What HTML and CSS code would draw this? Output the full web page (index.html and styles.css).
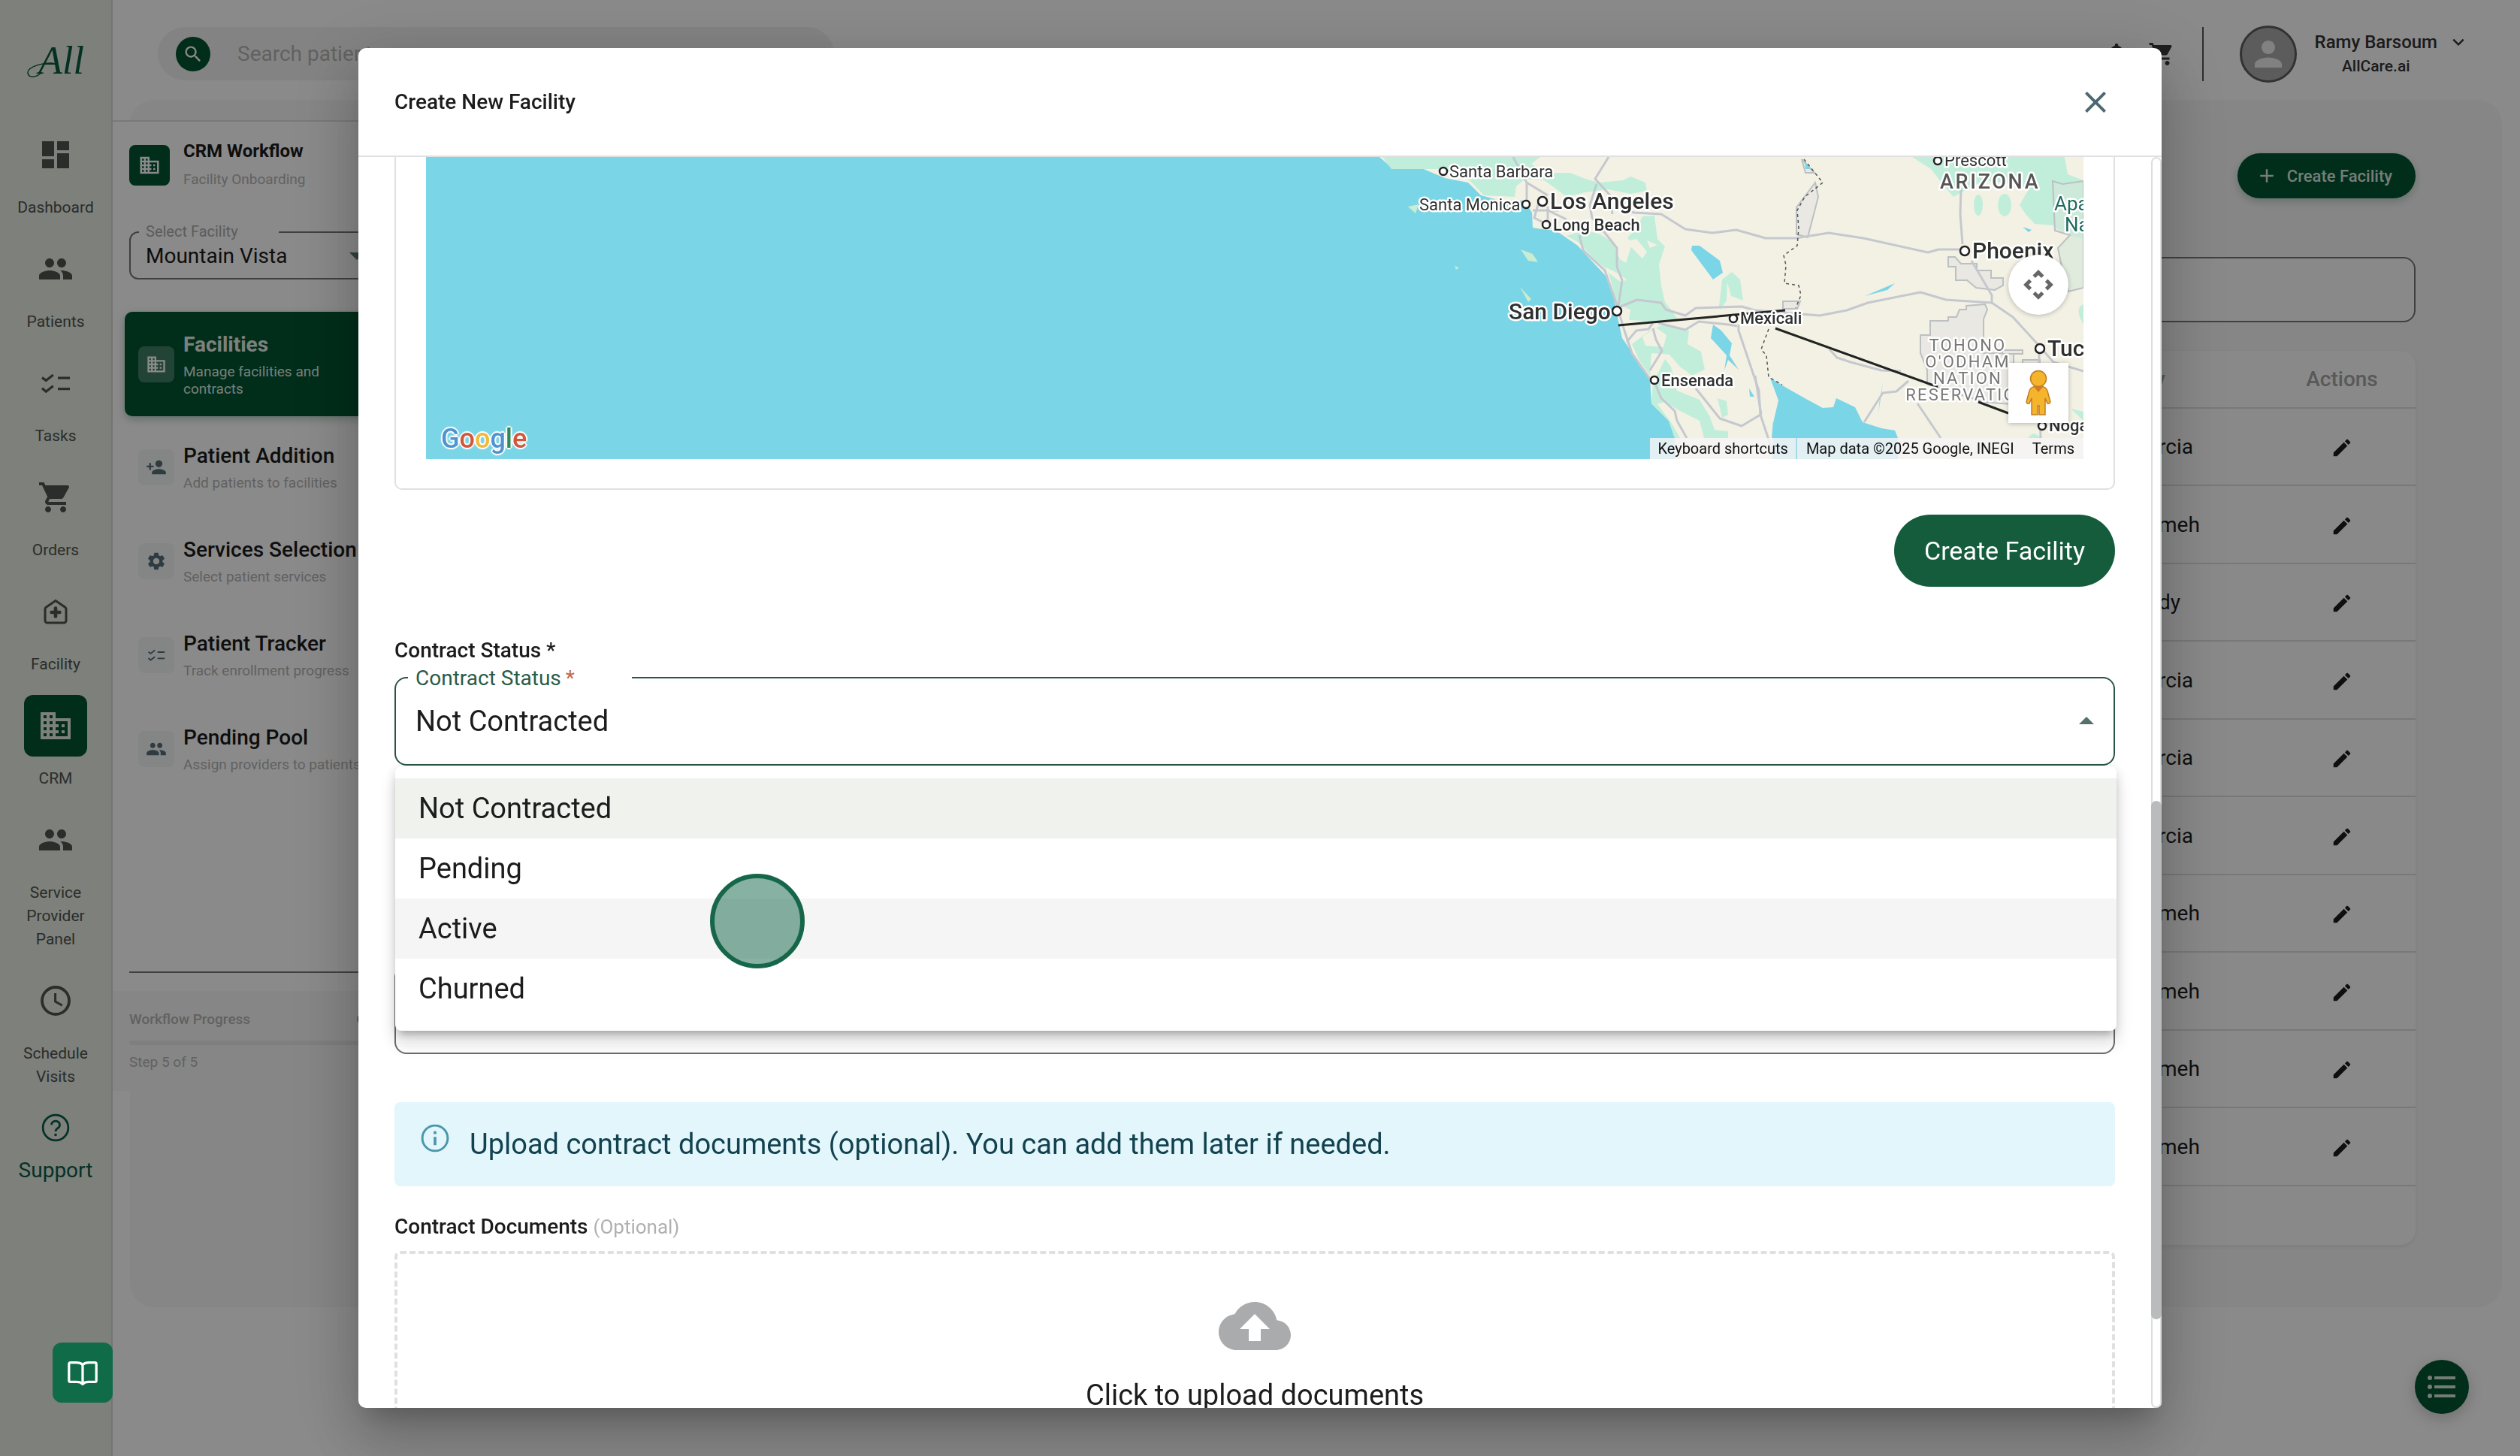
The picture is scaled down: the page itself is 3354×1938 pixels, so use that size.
FILE: index.html
```html
<!DOCTYPE html>
<html lang="en">
<head>
<meta charset="utf-8">
<meta name="viewport" content="width=device-width, initial-scale=1">
<title>Create New Facility</title>
<link rel="stylesheet" href="styles.css">
</head>
<body>
<svg class="sprite" aria-hidden="true">
  <symbol id="i-dashboard" viewBox="0 0 24 24"><path d="M3 13h8V3H3v10zm0 8h8v-6H3v6zm10 0h8V11h-8v10zm0-18v6h8V3h-8z"/></symbol>
  <symbol id="i-people" viewBox="0 0 24 24"><path d="M16 11c1.66 0 2.99-1.34 2.99-3S17.66 5 16 5c-1.66 0-3 1.34-3 3s1.34 3 3 3zm-8 0c1.66 0 2.99-1.34 2.99-3S9.66 5 8 5C6.34 5 5 6.34 5 8s1.34 3 3 3zm0 2c-2.33 0-7 1.17-7 3.5V19h14v-2.5c0-2.33-4.67-3.5-7-3.5zm8 0c-.29 0-.62.02-.97.05 1.16.84 1.97 1.97 1.97 3.45V19h6v-2.5c0-2.33-4.67-3.5-7-3.5z"/></symbol>
  <symbol id="i-tasks" viewBox="0 0 24 24"><path d="M3 8.300l2.600 1.900L10.400 6.500M3 15.400l2.600 2.200 4.800-3.700M13.500 8.600H21.500M13.500 15.800H21.500" fill="none" stroke="currentColor" stroke-width="1.600"/></symbol>
  <symbol id="i-cart" viewBox="0 0 24 24"><path d="M7 18c-1.100 0-1.990.9-1.990 2S5.900 22 7 22s2-.9 2-2-.9-2-2-2zM1 2v2h2l3.600 7.590-1.350 2.450c-.16.28-.25.61-.25.96 0 1.100.9 2 2 2h12v-2H7.420c-.14 0-.25-.11-.25-.25l.03-.12.9-1.630h7.450c.75 0 1.410-.41 1.750-1.030l3.580-6.490A1.003 1.003 0 0 0 20 4H5.210l-.94-2H1zm16 16c-1.100 0-1.990.9-1.990 2s.89 2 1.990 2 2-.9 2-2-.9-2-2-2z"/></symbol>
  <symbol id="i-facility" viewBox="0 0 24 24"><path d="M5.500 9.200L12 4.800l6.500 4.400a2 2 0 0 1 .5 1.200V18a1.500 1.500 0 0 1-1.500 1.500h-11A1.500 1.500 0 0 1 5 18v-7.600a2 2 0 0 1 .5-1.200z" fill="none" stroke="currentColor" stroke-width="1.500"/><path d="M12 9.800v5.400M9.300 12.500h5.400" stroke="currentColor" stroke-width="2.300" stroke-linecap="round"/></symbol>
  <symbol id="i-domain" viewBox="0 0 24 24"><path d="M12 7V3H2v18h20V7H12zM6 19H4v-2h2v2zm0-4H4v-2h2v2zm0-4H4V9h2v2zm0-4H4V5h2v2zm4 12H8v-2h2v2zm0-4H8v-2h2v2zm0-4H8V9h2v2zm0-4H8V5h2v2zm10 12h-8v-2h2v-2h-2v-2h2v-2h-2V9h8v10zm-2-8h-2v2h2v-2zm0 4h-2v2h2v-2z"/></symbol>
  <symbol id="i-clock" viewBox="0 0 24 24"><circle cx="12" cy="12" r="9" fill="none" stroke="currentColor" stroke-width="1.900"/><path d="M11.800 7v5.500l4.600 2.600" fill="none" stroke="currentColor" stroke-width="1.500"/></symbol>
  <symbol id="i-help" viewBox="0 0 24 24"><circle cx="12" cy="12" r="9.200" fill="none" stroke="currentColor" stroke-width="1.500"/><path d="M9 10a3 2.800 0 1 1 4.600 2.300c-1 .7-1.600 1.100-1.600 2.400" fill="none" stroke="currentColor" stroke-width="1.500"/><circle cx="12" cy="17.200" r="1"/></symbol>
  <symbol id="i-add-person" viewBox="0 0 24 24"><path d="M15 12c2.210 0 4-1.790 4-4s-1.790-4-4-4-4 1.790-4 4 1.790 4 4 4zm-9-2V7H4v3H1v2h3v3h2v-3h3v-2H6zm9 4c-2.670 0-8 1.340-8 4v2h16v-2c0-2.660-5.330-4-8-4z"/></symbol>
  <symbol id="i-gear" viewBox="0 0 24 24"><path d="M19.140 12.940c.04-.3.06-.61.06-.94 0-.32-.02-.64-.07-.94l2.030-1.580c.18-.14.23-.41.12-.61l-1.920-3.320c-.12-.22-.37-.29-.59-.22l-2.390.96c-.5-.38-1.030-.7-1.620-.94l-.36-2.540c-.04-.24-.24-.41-.48-.41h-3.840c-.24 0-.43.17-.47.41l-.36 2.540c-.59.24-1.130.57-1.620.94l-2.390-.96c-.22-.08-.47 0-.59.22L2.740 8.870c-.12.21-.08.47.12.61l2.030 1.580c-.05.3-.09.63-.09.94s.02.64.07.94l-2.030 1.580c-.18.14-.23.41-.12.61l1.920 3.320c.12.22.37.29.59.22l2.390-.96c.5.38 1.030.7 1.620.94l.36 2.540c.05.24.24.41.48.41h3.840c.24 0 .44-.17.47-.41l.36-2.540c.59-.24 1.130-.56 1.620-.94l2.390.96c.22.08.47 0 .59-.22l1.920-3.320c.12-.22.07-.47-.12-.61l-2.010-1.580zM12 15.600c-1.980 0-3.600-1.620-3.600-3.600s1.620-3.600 3.600-3.600 3.600 1.620 3.600 3.600-1.620 3.600-3.600 3.600z"/></symbol>
  <symbol id="i-edit" viewBox="0 0 24 24"><path d="M3 17.250V21h3.750L17.810 9.940l-3.750-3.750L3 17.250zM20.710 7.040c.39-.39.39-1.020 0-1.410l-2.340-2.340c-.39-.39-1.020-.39-1.410 0l-1.830 1.830 3.750 3.750 1.830-1.830z"/></symbol>
  <symbol id="i-search" viewBox="0 0 24 24"><path d="M15.500 14h-.79l-.28-.27C15.410 12.590 16 11.110 16 9.500 16 5.910 13.090 3 9.500 3S3 5.910 3 9.500 5.910 16 9.500 16c1.610 0 3.090-.59 4.230-1.570l.27.28v.79l5 4.990L20.490 19l-4.990-5zm-6 0C7.010 14 5 11.990 5 9.500S7.010 5 9.500 5 14 7.010 14 9.500 11.990 14 9.500 14z"/></symbol>
  <symbol id="i-bell" viewBox="0 0 24 24"><path d="M12 22c1.100 0 2-.9 2-2h-4c0 1.100.9 2 2 2zm6-6v-5c0-3.070-1.640-5.640-4.500-6.320V4c0-.83-.67-1.500-1.500-1.500s-1.500.67-1.500 1.500v.68C7.630 5.360 6 7.920 6 11v5l-2 2v1h16v-1l-2-2z"/></symbol>
  <symbol id="i-person" viewBox="0 0 24 24"><path d="M12 12c2.210 0 4-1.790 4-4s-1.790-4-4-4-4 1.790-4 4 1.790 4 4 4zm0 2c-2.670 0-8 1.340-8 4v2h16v-2c0-2.660-5.330-4-8-4z"/></symbol>
  <symbol id="i-list" viewBox="0 0 24 24"><circle cx="4" cy="6" r="1.500"/><circle cx="4" cy="12" r="1.500"/><circle cx="4" cy="18" r="1.500"/><path d="M7 5h14v2H7zM7 11h14v2H7zM7 17h14v2H7z"/></symbol>
  <symbol id="i-plus" viewBox="0 0 24 24"><path d="M19 13h-6v6h-2v-6H5v-2h6V5h2v6h6v2z"/></symbol>
  <symbol id="i-close" viewBox="0 0 24 24"><path d="M19 6.410L17.590 5 12 10.590 6.410 5 5 6.410 10.590 12 5 17.590 6.410 19 12 13.410 17.590 19 19 17.590 13.410 12z"/></symbol>
  <symbol id="i-cloud" viewBox="0 0 24 24"><path d="M19.350 10.040C18.670 6.590 15.640 4 12 4 9.110 4 6.600 5.640 5.350 8.040 2.340 8.360 0 10.910 0 14c0 3.310 2.690 6 6 6h13c2.760 0 5-2.240 5-5 0-2.640-2.050-4.780-4.650-4.960zM14 13v4h-4v-4H7l5-5 5 5h-3z"/></symbol>
  <symbol id="i-info" viewBox="0 0 24 24"><circle cx="12" cy="12" r="9.200" fill="none" stroke="currentColor" stroke-width="1.600"/><path d="M11 7h2v2h-2zM11 11h2v6h-2z"/></symbol>
  <symbol id="i-book" viewBox="0 0 24 24"><path d="M12 6.500C11 5.600 9.500 5 7.500 5H3.500a1 1 0 0 0-1 1v11.500a1 1 0 0 0 1 1H8c1.800 0 3 .4 4 1.500 1-1.100 2.200-1.500 4-1.500h4.500a1 1 0 0 0 1-1V6a1 1 0 0 0-1-1h-4c-2 0-3.500.6-4.500 1.500zM12 6.500V20" fill="none" stroke="currentColor" stroke-width="1.700" stroke-linejoin="round"/></symbol>
  <symbol id="i-down" viewBox="0 0 24 24"><path d="M4 8l8 8 8-8" fill="none" stroke="currentColor" stroke-width="3"/></symbol>
</svg>

<div class="app">
  <nav class="rail" aria-label="Main">
    <a class="logo" href="#"><svg class="logo-swash" viewBox="0 0 76 48" aria-hidden="true"><path d="M34 27C18 27 2 32 1 39C1 47 11 47 19 40" fill="none" stroke="currentColor" stroke-width="1.500"/></svg><span>All</span></a>
    <div class="rail-items">
      <a class="rail-item" href="#"><span class="rail-icon"><svg><use href="#i-dashboard"/></svg></span>Dashboard</a>
      <a class="rail-item" href="#"><span class="rail-icon"><svg><use href="#i-people"/></svg></span>Patients</a>
      <a class="rail-item" href="#"><span class="rail-icon"><svg><use href="#i-tasks"/></svg></span>Tasks</a>
      <a class="rail-item" href="#"><span class="rail-icon"><svg><use href="#i-cart"/></svg></span>Orders</a>
      <a class="rail-item" href="#"><span class="rail-icon"><svg><use href="#i-facility"/></svg></span>Facility</a>
      <a class="rail-item active" href="#"><span class="rail-icon"><svg><use href="#i-domain"/></svg></span>CRM</a>
      <a class="rail-item" href="#"><span class="rail-icon"><svg><use href="#i-people"/></svg></span>Service<br>Provider<br>Panel</a>
      <a class="rail-item" href="#"><span class="rail-icon"><svg><use href="#i-clock"/></svg></span>Schedule<br>Visits</a>
    </div>
    <a class="support" href="#"><svg><use href="#i-help"/></svg>Support</a>
  </nav>

  <div class="page">
    <header class="topbar">
      <div class="search">
        <button class="search-btn" type="button" aria-label="Search"><svg><use href="#i-search"/></svg></button>
        <input class="search-input" type="text" placeholder="Search patients" aria-label="Search patients">
      </div>
      <div class="top-right">
        <svg class="top-icon"><use href="#i-bell"/></svg>
        <svg class="top-icon"><use href="#i-cart"/></svg>
        <span class="top-divider"></span>
        <span class="avatar"><svg><use href="#i-person"/></svg></span>
        <button class="user" type="button"><span class="user-text"><span class="user-name">Ramy Barsoum</span><span class="user-org">AllCare.ai</span></span><svg class="user-chev"><use href="#i-down"/></svg></button>
      </div>
    </header>

    <div class="workspace">
      <main class="panel">
        <button class="create-btn" type="button"><svg><use href="#i-plus"/></svg>Create Facility</button>
        <input class="filter" type="text" aria-label="Filter facilities">
        <div class="table-card">
          <table class="grid">
            <colgroup><col><col class="col-name"><col class="col-act"></colgroup>
            <thead><tr><th></th><th>y</th><th class="act">Actions</th></tr></thead>
            <tbody>
              <tr><td></td><td>rcia</td><td class="act"><button type="button" aria-label="Edit"><svg><use href="#i-edit"/></svg></button></td></tr>
              <tr><td></td><td>meh</td><td class="act"><button type="button" aria-label="Edit"><svg><use href="#i-edit"/></svg></button></td></tr>
              <tr><td></td><td>dy</td><td class="act"><button type="button" aria-label="Edit"><svg><use href="#i-edit"/></svg></button></td></tr>
              <tr><td></td><td>rcia</td><td class="act"><button type="button" aria-label="Edit"><svg><use href="#i-edit"/></svg></button></td></tr>
              <tr><td></td><td>rcia</td><td class="act"><button type="button" aria-label="Edit"><svg><use href="#i-edit"/></svg></button></td></tr>
              <tr><td></td><td>rcia</td><td class="act"><button type="button" aria-label="Edit"><svg><use href="#i-edit"/></svg></button></td></tr>
              <tr><td></td><td>meh</td><td class="act"><button type="button" aria-label="Edit"><svg><use href="#i-edit"/></svg></button></td></tr>
              <tr><td></td><td>meh</td><td class="act"><button type="button" aria-label="Edit"><svg><use href="#i-edit"/></svg></button></td></tr>
              <tr><td></td><td>meh</td><td class="act"><button type="button" aria-label="Edit"><svg><use href="#i-edit"/></svg></button></td></tr>
              <tr><td></td><td>meh</td><td class="act"><button type="button" aria-label="Edit"><svg><use href="#i-edit"/></svg></button></td></tr>
            </tbody>
          </table>
        </div>
      </main>

      <aside class="drawer">
        <div class="drawer-head">
          <span class="drawer-badge"><svg><use href="#i-domain"/></svg></span>
          <div><h2>CRM Workflow</h2><p>Facility Onboarding</p></div>
        </div>
        <div class="field-sm">
          <label for="facility">Select Facility</label>
          <select id="facility"><option>Mountain Vista</option></select>
          <svg class="arrow-down" viewBox="0 0 20 10"><path d="M0 0h20L10 10z"/></svg>
        </div>
        <div class="steps">
          <a class="step active" href="#"><span class="step-icon"><svg><use href="#i-domain"/></svg></span><span class="step-text"><b>Facilities</b><small>Manage facilities and<br>contracts</small></span></a>
          <a class="step" href="#"><span class="step-icon"><svg><use href="#i-add-person"/></svg></span><span class="step-text"><b>Patient Addition</b><small>Add patients to facilities</small></span></a>
          <a class="step" href="#"><span class="step-icon"><svg><use href="#i-gear"/></svg></span><span class="step-text"><b>Services Selection</b><small>Select patient services</small></span></a>
          <a class="step" href="#"><span class="step-icon"><svg><use href="#i-tasks"/></svg></span><span class="step-text"><b>Patient Tracker</b><small>Track enrollment progress</small></span></a>
          <a class="step" href="#"><span class="step-icon"><svg><use href="#i-people"/></svg></span><span class="step-text"><b>Pending Pool</b><small>Assign providers to patients</small></span></a>
        </div>
        <div class="drawer-rule"></div>
        <div class="progress">
          <div class="progress-row"><span>Workflow Progress</span><strong>0%</strong></div>
          <div class="progress-bar"></div>
          <div class="progress-step">Step 5 of 5</div>
        </div>
      </aside>
    </div>
  </div>
  <button class="fab" type="button" aria-label="Open list"><svg><use href="#i-list"/></svg></button>
</div>

<div class="backdrop">
  <section class="dialog" role="dialog" aria-labelledby="dlg-title">
    <header class="dialog-head">
      <h1 id="dlg-title">Create New Facility</h1>
      <button class="close" type="button" aria-label="Close"><svg><use href="#i-close"/></svg></button>
    </header>
    <div class="dialog-main">
      <form class="dialog-body">
        <div class="map-card">
          <div class="map">
            <svg class="map-svg" viewBox="567 209 2206 402" preserveAspectRatio="xMaxYMax slice" role="img" aria-label="Map of Southern California and Arizona">
              <rect x="-2000" y="209" width="4773" height="402" fill="#7ad6e6"/>
              <path fill="#f3f1e4" d="M1836 209L1852 223H1890L1923 237L1954 243L1971 260L2000 268L2029 267L2039 283L2040 303L2052 305L2071 307L2100 327L2121 350L2137 367L2148 397L2154 427L2159 450L2171 467L2182 487L2196 503L2198 537L2221 560L2229 583L2230 611H2773V209Z"/>
              <g fill="#c1eedb">
                <path d="M1840 209H2050L2038 218L2055 230H2090L2110 238L2128 243L2160 240L2170 235L2190 243L2192 254L2170 258L2140 252L2110 256L2085 262L2072 252L2055 240L2030 238L2018 248L2016 262L1975 260L1956 240L1920 225H1852Z"/>
                <path d="M2085 314L2110 306L2130 312L2146 322L2156 345L2164 350L2172 325L2166 316L2178 305L2186 288L2202 287L2206 318L2216 328L2208 352L2211 380L2216 402L2226 415L2235 428H2205L2168 426L2170 412L2152 405L2140 360L2122 345L2100 322Z"/>
                <path d="M2172 458L2196 440L2214 432L2248 440L2246 458L2264 468L2269 492L2252 500L2236 488L2222 472L2198 470L2196 500L2182 480Z"/>
                <path d="M2200 510L2216 478L2224 488L2232 520L2262 532L2276 555L2282 572L2300 574V583H2268L2262 560L2238 548L2215 535L2206 538L2224 562L2236 583H2229L2221 560L2198 537Z"/>
                <path d="M2288 408L2292 372L2305 362L2316 372L2320 400L2304 394L2299 376L2298 400L2290 412Z"/>
                <path d="M2286 530L2298 534L2300 552L2292 556Z"/>
                <path d="M2545 209H2748L2752 232L2773 240V318L2750 312L2733 300L2708 298L2696 285L2688 273L2700 252L2680 245L2640 240L2600 262L2588 248L2570 225Z"/>
                <ellipse cx="2633" cy="273" rx="6" ry="14"/><ellipse cx="2668" cy="273" rx="9" ry="15"/>
                <path d="M2773 405Q2760 410 2773 432ZM2773 548L2756 544L2773 560ZM2700 583Q2706 572 2716 583Z"/>
              </g>
              <g fill="#f3f1e4"><path d="M2162 322L2178 318L2192 335L2186 344L2172 330ZM2137 356L2150 362L2165 372L2158 376L2142 364ZM2186 448L2204 436L2218 446L2214 462L2190 460ZM2192 320L2206 326L2196 330Z"/></g>
              <g fill="#e9e8e2" stroke="#bcc0c2" stroke-width="2">
                <path d="M2593 342H2602L2610 351H2631V360H2650V370H2666V380L2655 386L2630 383L2618 373H2603V355H2593Z"/>
                <path d="M2569 427H2593V422H2604L2608 412H2617V407L2642 405L2645 412L2640 425V470H2680V490H2700V540L2640 535L2565 511V492L2556 470V446H2569Z"/>
                <path d="M2416 243L2420 262L2406 316L2391 312V276Z"/>
                <path d="M2732 241L2745 245L2773 241V383L2753 388L2745 360L2739 330L2755 313L2735 307Z" fill="#d3e6d8" fill-opacity=".6"/>
                <path d="M2373 401H2396L2392 411H2373ZM2398 212L2415 230H2403ZM2692 479H2715V490H2692ZM2665 466H2692V471H2665Z"/>
              </g>
              <g fill="#7ad6e6">
                <path d="M2252 327H2262L2289 347L2293 363L2280 372L2251 333Z"/>
                <path d="M2280 432L2291 440L2305 457L2302 473L2314 492L2300 479L2295 493L2298 473L2277 450Z"/>
                <path d="M2356 503L2379 517L2402 530L2426 543L2440 542L2444 530L2469 542L2479 562L2504 570L2522 573L2526 583V611H2359L2360 563L2367 533Z"/>
                <path d="M2482 394L2522 377L2512 386ZM2506 510L2500 550L2502 530ZM2328 517L2335 528H2329ZM2692 302L2704 306L2700 309ZM2402 214L2410 225H2403ZM2360 560V583H2358Z"/>
              </g>
              <g fill="#c9ecd2"><path d="M2024 332L2040 338L2047 349L2034 347ZM2023 382L2038 398L2034 402ZM1936 354L1942 356L1938 359ZM1874 275L1888 272L1884 284Z"/></g>
              <g fill="none" stroke="#c5c8cf" stroke-width="3" stroke-linejoin="round">
                <path d="M2141 209L2123 238L2143 260L2146 285M2014 209L2032 243L2060 260M2032 243V275M2040 280H2075M2050 262L2042 290L2058 298M2060 275V300M2060 280L2085 292"/>
                <path d="M2150 275L2175 283L2211 285L2243 305L2279 310L2311 306L2350 317H2390L2434 310L2480 317L2566 336L2580 332H2608"/>
                <path d="M2610 250L2609 285L2612 325M2624 347L2651 393V403"/>
                <path d="M2157 408L2179 399L2211 403L2217 412L2243 420L2257 410L2318 408L2336 413L2422 420L2458 413L2486 403L2556 389L2590 399L2651 403L2679 422L2711 457L2733 482L2773 494"/>
                <path d="M2125 245L2116 273L2119 290L2136 310L2152 330V355L2159 373L2154 407M2102 313L2107 333L2136 360L2150 400L2162 440L2172 470L2200 510"/>
                <path d="M2204 513L2211 530L2229 547L2232 560L2245 583M2257 517L2289 557L2318 567L2343 552L2341 520L2314 440V432M2343 552L2359 600"/>
                <path d="M2165 455L2178 440L2194 438L2200 430M2200 437L2204 452L2212 467L2196 493M2207 430L2243 439L2261 428L2300 432L2312 434M2336 500L2344 552"/>
                <path d="M2435 465L2445 476L2463 482L2504 493L2530 494M2481 562L2506 523L2524 521L2540 507M2552 537L2583 583M2714 470V510L2716 583"/>
              </g>
              <g fill="none" stroke="#555" stroke-width="1.500" stroke-dasharray="4 4"><path d="M2401 212L2426 243L2402 262L2392 280L2394 303L2392 327L2374 340L2377 353L2375 377L2394 380L2397 393L2390 410M2354 438L2344 465L2351 473L2354 502L2372 512"/></g>
              <g stroke="#222422" stroke-width="3"><path d="M2154 433L2376 413M2363 437L2579 515M2633 535L2673 550"/></g>
              <g class="pins" fill="#fff" stroke="#222" stroke-width="2.500">
                <circle cx="1921" cy="228" r="5"/><circle cx="2031" cy="272" r="5"/><circle cx="2053" cy="268" r="6"/><circle cx="2058" cy="299" r="5"/><circle cx="2152" cy="414" r="6"/><circle cx="2202" cy="506" r="5"/><circle cx="2307" cy="424" r="5"/><circle cx="2579" cy="214" r="5"/><circle cx="2615" cy="334" r="6"/><circle cx="2715" cy="464" r="6"/><circle cx="2718" cy="567" r="5"/>
              </g>
              <g class="town">
                <text x="1929" y="236">Santa Barbara</text><text x="1889" y="280">Santa Monica</text><text x="2588" y="221">Prescott</text>
              </g>
              <g class="town major"><text x="2067" y="307">Long Beach</text><text x="2211" y="514">Ensenada</text><text x="2316" y="431">Mexicali</text><text x="2727" y="574">Nogales</text></g>
              <g class="city"><text x="2063" y="278">Los Angeles</text><text x="2008" y="425">San Diego</text><text x="2625" y="344">Phoenix</text><text x="2725" y="474">Tucson</text></g>
              <text class="state" x="2582" y="251">ARIZONA</text>
              <g class="nation"><text x="2619" y="467">TOHONO</text><text x="2619" y="489">O'ODHAM</text><text x="2619" y="511">NATION</text><text x="2619" y="533">RESERVATION</text></g>
              <g class="forest"><text x="2734" y="280">Apache</text><text x="2748" y="308">National</text></g>
            </svg>
            <a class="google" href="#" aria-label="Google"><span class="g-b">G</span><span class="g-r">o</span><span class="g-y">o</span><span class="g-b">g</span><span class="g-g">l</span><span class="g-r">e</span></a>
            <div class="map-controls">
              <button class="pan" type="button" aria-label="Map camera controls"><svg viewBox="0 0 48 48"><path d="M17 11l7-7 7 7M17 37l7 7 7-7M11 17l-7 7 7 7M37 17l7 7-7 7" transform="translate(4.300 4.300) scale(.82)" fill="none" stroke="#666" stroke-width="6"/></svg></button>
              <button class="pegman" type="button" aria-label="Street View"><svg viewBox="0 0 34 62"><path d="M8 24Q17 18 26 24Q29 26 30 32L33 43Q32 46 29 45L26 38V60H18V48H16V60H8V38L5 45Q2 46 1 43L4 32Q5 26 8 24Z" fill="#f4b42c" stroke="#c17d22" stroke-width="1.500"/><path d="M11 23h12l-6 7z" fill="#d9762b"/><circle cx="17" cy="12" r="10.500" fill="#f4b42c" stroke="#c17d22" stroke-width="1.500"/></svg></button>
            </div>
            <div class="attrib"><button type="button">Keyboard shortcuts</button><span>Map data ©2025 Google, INEGI</span><a href="#">Terms</a></div>
          </div>
        </div>

        <button class="submit" type="button">Create Facility</button>

        <div class="group-label">Contract Status *</div>
        <div class="field">
          <label for="status">Contract Status<span class="req">*</span></label>
          <select id="status"><option>Not Contracted</option></select>
          <svg class="arrow-up" viewBox="0 0 20 10"><path d="M0 10h20L10 0z"/></svg>
          <ul class="menu" role="listbox" aria-label="Contract Status">
            <li class="selected" role="option" aria-selected="true">Not Contracted</li>
            <li role="option">Pending</li>
            <li class="hover" role="option">Active</li>
            <li role="option">Churned</li>
          </ul>
        </div>
        <input class="plain-input" type="text" aria-label="Contract details">

        <div class="alert"><svg><use href="#i-info"/></svg><span>Upload contract documents (optional). You can add them later if needed.</span></div>

        <div class="group-label docs">Contract Documents <span>(Optional)</span></div>
        <button class="dropzone" type="button"><svg><use href="#i-cloud"/></svg><span>Click to upload documents</span></button>
      </form>
      <div class="scrollbar"><div class="thumb"></div></div>
    </div>
    <span class="pointer"></span>
  </section>
</div>
<button class="guide" type="button" aria-label="Open guide"><svg><use href="#i-book"/></svg></button>
</body>
</html>
```
FILE: styles.css
```css
* { box-sizing: border-box; }
body { margin: 0; font-family: Roboto, "Liberation Sans", sans-serif; color: #1c1c1c; background: #fff; }
h1, h2, p, ul { margin: 0; padding: 0; }
button, input, select { font: inherit; color: inherit; margin: 0; padding: 0; border: 0; background: none; }
button { cursor: pointer; }
a { color: inherit; text-decoration: none; }
svg { display: block; flex: none; fill: currentColor; }
.sprite { position: absolute; width: 0; height: 0; }

.app { display: grid; grid-template-columns: 150px 1fr; min-height: 100vh; overflow: hidden; }

/* left navigation */
.rail { background: #e7ece4; border-right: 2px solid #d6d9d4; display: flex; flex-direction: column; align-items: center; color: #50544e; font-size: 21px; line-height: 31px; text-align: center; }
.logo { display: grid; align-items: center; justify-items: end; width: 76px; height: 48px; margin-top: 57px; color: #0b5c40; font: italic 52px/48px "Liberation Serif", serif; }
.logo > * { grid-area: 1 / 1; }
.logo-swash { width: 76px; height: 48px; }
.rail-items { display: flex; flex-direction: column; gap: 25px; margin-top: 60px; }
.rail-item { display: flex; flex-direction: column; align-items: center; }
.rail-icon { display: grid; place-items: center; width: 84px; height: 82px; margin-bottom: 14px; border-radius: 12px; }
.rail-icon svg { width: 48px; height: 48px; }
.rail-item.active .rail-icon { background: #005530; color: #e7ece4; }
.support { display: flex; flex-direction: column; align-items: center; gap: 19px; margin-top: 30px; color: #0b5c46; font-size: 28px; line-height: 32px; }
.support svg { width: 44px; height: 44px; }

/* top bar */
.topbar { display: flex; justify-content: space-between; height: 133px; padding: 36px 72px 0 60px; }
.search { display: flex; align-items: center; gap: 36px; width: 900px; height: 71px; padding: 0 24px; border-radius: 36px; background: #f2f2f2; }
.search-btn { display: grid; place-items: center; width: 46px; height: 46px; border-radius: 50%; background: #005530; color: #fff; }
.search-btn svg { width: 28px; height: 28px; }
.search-input { flex: 1; font-size: 28px; }
.search-input::placeholder { color: #b4b4b4; opacity: 1; }
.top-right { display: flex; align-items: center; height: 72px; }
.top-icon { width: 36px; height: 36px; margin-right: 24px; color: #383838; }
.top-divider { width: 2px; height: 72px; margin-left: 12px; background: #555; }
.avatar { display: grid; place-items: center; width: 76px; height: 76px; margin-left: 48px; border: 3px solid #5c5e5c; border-radius: 50%; background: #a9aba9; color: #eee; }
.avatar svg { width: 54px; height: 54px; }
.user { display: flex; align-items: flex-start; gap: 18px; margin-left: 24px; color: #333; }
.user-text { display: flex; flex-direction: column; align-items: center; font-weight: 500; line-height: 32px; }
.user-name { font-size: 24px; }
.user-org { font-size: 21px; }
.user-chev { width: 20px; height: 20px; margin-top: 6px; }

/* workspace */
.workspace { display: grid; }
.workspace > * { grid-area: 1 / 1; }
.panel { display: flex; flex-direction: column; align-self: start; margin: 0 24px 0 23px; padding: 71px 115px 83px 440px; border-radius: 32px; background: #f8f8f8; }
.create-btn { align-self: flex-end; display: flex; align-items: center; gap: 12px; height: 60px; padding: 0 31px 0 24px; border-radius: 30px; background: #005530; color: #dde6df; font-size: 22px; font-weight: 500; box-shadow: 0 4px 12px rgba(0, 85, 48, .25); }
.create-btn svg { width: 30px; height: 30px; }
.filter { height: 87px; margin-top: 78px; border: 2px solid #777; border-radius: 16px; background: #fdfdfd; }
.table-card { margin-top: 38px; padding-bottom: 78px; border-radius: 20px; background: #fdfdfd; box-shadow: 0 2px 6px rgba(0, 0, 0, .08); }
.grid { width: 100%; border-collapse: collapse; table-layout: fixed; font-size: 28px; }
.col-name { width: 179px; }
.col-act { width: 196px; }
.grid th { height: 76px; padding: 0 0 0 28px; text-align: left; font-weight: 500; color: #a5a5a5; border-bottom: 2px solid #dedede; }
.grid td { padding: 0 0 0 33px; border-bottom: 2px solid #dedede; }
.grid tbody tr { height: 103px; }
.grid tbody tr:nth-child(even) { height: 104px; }
.grid .act { padding: 0; text-align: center; }
.grid button { display: inline-block; vertical-align: middle; }
.grid svg { width: 30px; height: 30px; }
.fab { position: fixed; right: 68px; bottom: 56px; display: grid; place-items: center; width: 72px; height: 72px; border-radius: 50%; background: #005530; color: #d8e4dc; box-shadow: 0 6px 20px rgba(0, 0, 0, .2); }
.fab svg { width: 48px; height: 48px; }

/* workflow drawer */
.drawer { align-self: start; width: 380px; margin-top: 27px; border-top: 2px solid #e0e0e0; background: #fff; color: #1a1a1a; }
.drawer-head { display: flex; align-items: center; gap: 18px; padding: 21px 22px 0; line-height: 37px; }
.drawer-head h2 { font-size: 24px; line-height: 37px; }
.drawer-head p { font-size: 19px; color: #b4b4b4; }
.drawer-badge { display: grid; place-items: center; width: 54px; height: 54px; border-radius: 8px; background: #005530; color: #fff; }
.drawer-badge svg { width: 30px; height: 30px; }
.field-sm { position: relative; margin: 51px 22px 0; }
.field-sm label { position: absolute; left: 13px; top: -12px; width: 186px; padding-left: 9px; background: #fff; font-size: 20px; line-height: 24px; color: #aaa; }
.field-sm select { width: 100%; height: 64px; padding: 0 20px; border: 2px solid #777; border-radius: 12px; appearance: none; font-size: 28px; }
.arrow-down { position: absolute; right: 23px; top: 28px; width: 20px; height: 10px; color: #5f7878; }
.steps { display: flex; flex-direction: column; gap: 9px; margin: 43px 16px 0; }
.step { display: flex; align-items: center; gap: 12px; padding: 26px 0 25px 18px; border-radius: 10px; white-space: nowrap; overflow: hidden; }
.step.active { background: #005530; color: #e8efe9; box-shadow: 0 4px 12px rgba(0, 85, 48, .3); }
.step-icon { display: grid; place-items: center; flex: none; width: 48px; height: 48px; border-radius: 8px; background: #f4f5f5; color: #56707a; }
.step-icon svg { width: 28px; height: 28px; }
.step.active .step-icon { background: rgba(255, 255, 255, .25); color: #fff; }
.step-text { display: flex; flex-direction: column; gap: 6px; }
.step b { font-size: 28px; line-height: 36px; font-weight: 500; }
.step.active b { font-weight: 700; }
.step small { font-size: 19px; line-height: 23px; color: #b4b4b4; }
.step.active small { color: #dfe9e2; }
.drawer-rule { margin: 239px 22px 0; border-top: 2px solid #777; }
.progress { margin-top: 24px; padding: 26px 22px; background: #f8f8f8; font-size: 19px; line-height: 24px; color: #b4b4b4; }
.progress-row { display: flex; justify-content: space-between; font-weight: 500; }
.progress-row strong { padding-right: 8px; color: #005530; }
.progress-bar { height: 6px; margin: 16px 0 11px; border-radius: 3px; background: #eaeaea; }

/* dialog */
.backdrop { position: fixed; inset: 0; padding: 64px; background: rgba(0, 0, 0, .46); }
.dialog { position: relative; display: flex; flex-direction: column; max-width: 2400px; height: 100%; margin: 0 auto; border-radius: 10px; background: #fff; box-shadow: 0 22px 30px -14px rgba(0, 0, 0, .2), 0 48px 76px 6px rgba(0, 0, 0, .14), 0 18px 92px 16px rgba(0, 0, 0, .12); }
.dialog-head { display: flex; align-items: center; justify-content: space-between; flex: none; height: 145px; padding: 0 64px 0 48px; border-bottom: 2px solid #e0e0e0; }
.dialog-head h1 { font-size: 28px; font-weight: 500; }
.close { color: #4d6870; }
.close svg { width: 48px; height: 48px; }
.dialog-main { display: flex; flex: 1; min-height: 0; }
.dialog-body { flex: 1; min-width: 0; overflow: hidden; display: flex; flex-direction: column; padding: 0 48px; border-radius: 0 0 10px 10px; }
.dialog-body > * { flex: none; }
.scrollbar { flex: none; width: 14px; border: 2px solid #dcdddd; border-radius: 8px; padding-top: 855px; background: #fff; }
.thumb { width: 14px; height: 690px; margin-left: -2px; border-radius: 8px; background: #b9bbbc; }

.map-card { padding: 0 40px 39px; border: 2px solid #e0e0e0; border-top: 0; border-radius: 0 0 10px 10px; }
.map { position: relative; height: 402px; overflow: hidden; }
.map-svg { width: 100%; height: 402px; }
.map-svg text { paint-order: stroke; stroke: #fff; stroke-width: 5px; stroke-linejoin: round; fill: #2e302f; }
.town { font-size: 22px; }
.major, .city { font-weight: 500; }
.city { font-size: 30px; }
.map-svg .state { font-size: 27px; font-weight: 500; letter-spacing: .1em; fill: #555; }
.nation { font-size: 22px; letter-spacing: .1em; text-anchor: middle; }
.map-svg .nation text { fill: #777; }
.forest { font-size: 26px; }
.map-svg .forest text { fill: #1f6b5f; }
.google { position: absolute; left: 20px; bottom: 6px; font-size: 36px; line-height: 42px; font-weight: 500; text-shadow: 0 0 2px #fff, 0 0 3px #fff, 0 0 3px #fff, 2px 0 1px #fff, -2px 0 1px #fff, 0 2px 1px #fff, 0 -2px 1px #fff; }
.g-b { color: #4f94cf; } .g-r { color: #d0583c; } .g-y { color: #f2b93b; } .g-g { color: #2b8a57; }
.map-controls { position: absolute; right: 20px; bottom: 48px; display: flex; flex-direction: column; gap: 64px; }
.map-controls button { display: grid; place-items: center; width: 80px; height: 80px; background: #fff; box-shadow: 0 1px 6px rgba(0, 0, 0, .25); }
.map-controls .pan { border-radius: 50%; }
.pan svg { width: 48px; height: 48px; }
.pegman svg { width: 34px; height: 62px; }
.attrib { position: absolute; right: 0; bottom: 0; display: flex; background: rgba(245, 245, 245, .85); font-size: 20px; line-height: 28px; color: #111; }
.attrib > * { padding: 0 12px; }
.attrib button { padding: 0 10px; border-right: 2px solid #a5dbe6; line-height: 28px; }

.submit { align-self: flex-end; height: 96px; margin-top: 33px; padding: 0 40px; border-radius: 48px; background: #145c3c; color: #fff; font-size: 34px; }
.group-label { margin-top: 65px; font-size: 28px; line-height: 40px; font-weight: 500; }
.field { position: relative; margin-top: 15px; }
.field label { position: absolute; left: 18px; top: -18px; width: 298px; padding-left: 10px; background: #fff; font-size: 28px; line-height: 40px; color: #2b5c49; }
.req { margin-left: 6px; color: #c46a45; }
.field select { width: 100%; height: 118px; padding: 0 26px; border: 2px solid #2a5546; border-radius: 16px; appearance: none; font-size: 38px; }
.arrow-up { position: absolute; right: 28px; top: 53px; width: 20px; height: 10px; color: #55706f; }
.menu { position: absolute; left: 1px; right: -2px; top: 119px; z-index: 2; padding: 16px 0; list-style: none; border-radius: 8px; background: #fff; box-shadow: 0 10px 10px -6px rgba(0, 0, 0, .2), 0 16px 20px 2px rgba(0, 0, 0, .12), 0 2px 14px rgba(0, 0, 0, .12); font-size: 38px; line-height: 80px; }
.menu li { padding: 0 31px; }
.menu .selected { background: #f0f2ed; }
.menu .hover { background: #f5f5f5; }
.plain-input { height: 118px; margin-top: 266px; padding: 0 29px; border: 2px solid #6b6d6c; border-radius: 16px; }
.alert { display: flex; gap: 24px; height: 112px; margin-top: 64px; padding: 26px 32px 0; border-radius: 8px; background: #e2f6fb; color: #12424f; font-size: 38px; line-height: 60px; }
.alert svg { width: 44px; height: 44px; color: #4a96ab; }
.docs { margin-top: 34px; }
.docs span { font-size: 26px; font-weight: 400; color: #b0b0b0; }
.dropzone { display: flex; flex-direction: column; align-items: center; gap: 16px; margin-top: 12px; padding: 48px 0; border: 4px dashed #e0e0e0; border-radius: 8px; font-size: 38px; line-height: 56px; }
.dropzone svg { width: 96px; height: 96px; color: #aaabac; }

/* click marker and guide button */
.pointer { position: absolute; left: 468px; top: 1099px; z-index: 3; width: 126px; height: 126px; border: 6px solid #16674a; border-radius: 50%; background: rgba(16, 100, 70, .5); }
.guide { position: fixed; left: 70px; bottom: 71px; display: grid; place-items: center; width: 80px; height: 80px; border-radius: 12px; background: #106b49; color: #fff; }
.guide svg { width: 46px; height: 46px; }
```
